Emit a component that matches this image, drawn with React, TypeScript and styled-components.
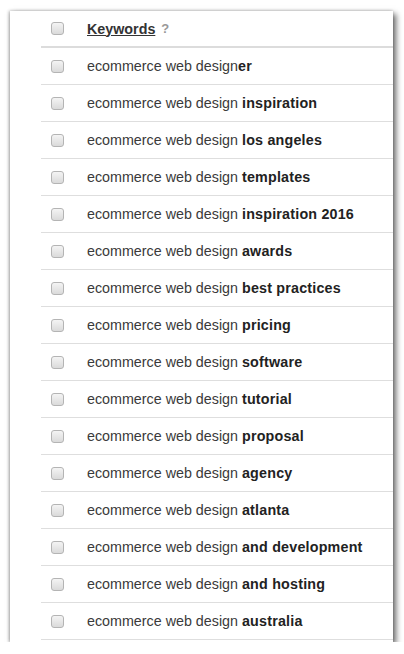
import React from "react";
import styled, { createGlobalStyle } from "styled-components";

const Global = createGlobalStyle`
  html, body { margin: 0; padding: 0; background: #ffffff; }
  body { font-family: Arial, "Liberation Sans", sans-serif; }
`;

const Page = styled.div`
  padding: 11px 0 0 10px;
`;

const Card = styled.div`
  width: 383px;
  height: 631px;
  background: #ffffff;
  box-sizing: border-box;
  padding-left: 31px;
  box-shadow: 3px 3px 6px rgba(0, 0, 0, 0.6), -1px 0 3px rgba(0, 0, 0, 0.3);
  overflow: hidden;
`;

const Row = styled.div<{ $header?: boolean }>`
  display: grid;
  grid-template-columns: 46px 1fr;
  align-items: center;
  height: ${(p) => (p.$header ? "35px" : "36px")};
  border-bottom: ${(p) => (p.$header ? "2px solid #dcdcdc" : "1px solid #dedede")};
  font-size: 14.3px;
  color: #3a3a3a;
`;

const Box = styled.span`
  display: block;
  margin-left: 10px;
  width: 11px;
  height: 11px;
  border: 1px solid #b4b4b4;
  border-radius: 3px;
  background: linear-gradient(#f4f4f4, #dadada);
`;

const Label = styled.span`
  white-space: nowrap;
  b {
    font-weight: bold;
    color: #222;
    letter-spacing: 0.2px;
  }
`;

const HeaderLabel = styled.span`
  font-weight: bold;
  color: #333;
  display: flex;
  align-items: center;
  gap: 6px;
`;

const Under = styled.span`
  text-decoration: underline;
`;

const Help = styled.span`
  color: #999;
  font-size: 13px;
  font-weight: bold;
`;

const rows: [string, string][] = [
  ["ecommerce web design", "er"],
  ["ecommerce web design ", "inspiration"],
  ["ecommerce web design ", "los angeles"],
  ["ecommerce web design ", "templates"],
  ["ecommerce web design ", "inspiration 2016"],
  ["ecommerce web design ", "awards"],
  ["ecommerce web design ", "best practices"],
  ["ecommerce web design ", "pricing"],
  ["ecommerce web design ", "software"],
  ["ecommerce web design ", "tutorial"],
  ["ecommerce web design ", "proposal"],
  ["ecommerce web design ", "agency"],
  ["ecommerce web design ", "atlanta"],
  ["ecommerce web design ", "and development"],
  ["ecommerce web design ", "and hosting"],
  ["ecommerce web design ", "australia"],
];

export default function App() {
  return (
    <Page>
      <Global />
      <Card>
        <Row $header>
          <Box />
          <HeaderLabel>
            <Under>Keywords</Under>
            <Help>?</Help>
          </HeaderLabel>
        </Row>
        {rows.map(([a, b], i) => (
          <Row key={i}>
            <Box />
            <Label>
              {a}
              <b>{b}</b>
            </Label>
          </Row>
        ))}
      </Card>
    </Page>
  );
}
